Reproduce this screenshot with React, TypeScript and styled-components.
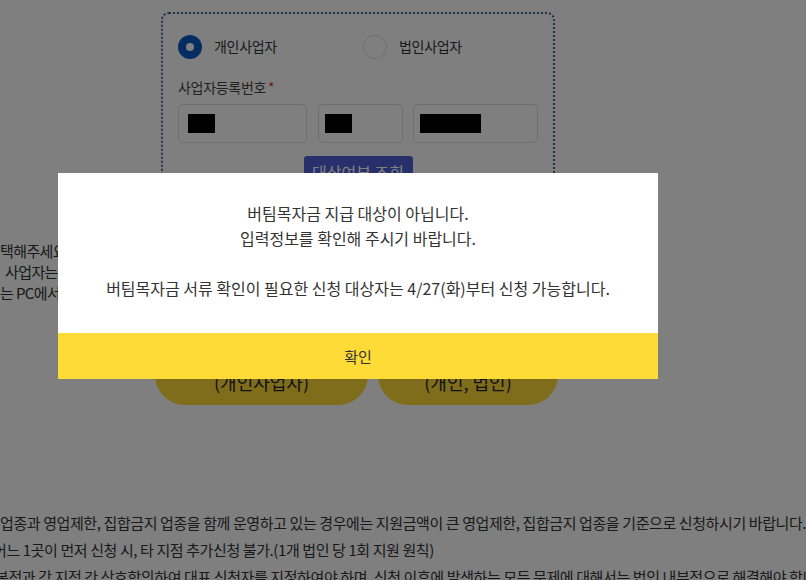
import styled, { createGlobalStyle } from "styled-components";

const GlobalStyle = createGlobalStyle`
  html, body {
    margin: 0;
    padding: 0;
    background: #fff;
    overflow: hidden;
  }
  body {
    font-family: "Noto Sans CJK KR", "Noto Sans", sans-serif;
    color: #333;
  }
`;

const YELLOW = "#ffdb38";

export default function App() {
  return (
    <>
      <GlobalStyle />
      <Page>
        <Column>
          <FormBox>
            <RadioRow>
              <RadioItem>
                <RadioDot checked />
                <RadioText>개인사업자</RadioText>
              </RadioItem>
              <RadioItem>
                <RadioDot />
                <RadioText>법인사업자</RadioText>
              </RadioItem>
            </RadioRow>
            <FieldLabel>
              사업자등록번호<Required>*</Required>
            </FieldLabel>
            <InputRow>
              <NumberBox width={129} pad={9}>
                <Redact width={27} />
              </NumberBox>
              <NumberBox width={85} pad={6}>
                <Redact width={27} />
              </NumberBox>
              <NumberBox width={125} pad={6}>
                <Redact width={61} />
              </NumberBox>
            </InputRow>
            <CheckButton>대상여부 조회</CheckButton>
          </FormBox>
        </Column>

        <SideNote>
          <NoteLine>택해주세요. 사업자 유형에 따라 신청 버튼을 선택하세요.</NoteLine>
          <NoteLine indent={5}>사업자는 개인사업자 신청하기 버튼을 이용해 주세요.</NoteLine>
          <NoteLine>는 PC에서만 신청이 가능합니다.</NoteLine>
        </SideNote>

        <Column>
          <ApplyRow>
            <ApplyButton width={213}>
              버팀목자금 신청하기
              <br />
              (개인사업자)
            </ApplyButton>
            <ApplyButton width={180}>
              서류 제출하기
              <br />
              (개인, 법인)
            </ApplyButton>
          </ApplyRow>
        </Column>

        <Notice>
          <NoticeLine>
            업종과 영업제한, 집합금지 업종을 함께 운영하고 있는 경우에는 지원금액이 큰 영업제한, 집합금지 업종을 기준으로 신청하시기 바랍니다.
          </NoticeLine>
          <NoticeLine indent={-7}>
            어느 1곳이 먼저 신청 시, 타 지점 추가신청 불가.(1개 법인 당 1회 지원 원칙)
          </NoticeLine>
          <NoticeLine indent={-5}>
            본점과 각 지점 간 상호합의하여 대표 신청자를 지정하여야 하며, 신청 이후에 발생하는 모든 문제에 대해서는 법인 내부적으로 해결해야 합니다.
          </NoticeLine>
        </Notice>
      </Page>

      <Overlay>
        <Modal>
          <ModalBody>
            <ModalText>버팀목자금 지급 대상이 아닙니다.</ModalText>
            <ModalText>입력정보를 확인해 주시기 바랍니다.</ModalText>
            <ModalText>&nbsp;</ModalText>
            <ModalText>
              버팀목자금 서류 확인이 필요한 신청 대상자는 4/27(화)부터 신청 가능합니다.
            </ModalText>
          </ModalBody>
          <ConfirmButton>확인</ConfirmButton>
        </Modal>
      </Overlay>
    </>
  );
}

const Page = styled.div`
  width: 806px;
  height: 580px;
  display: flex;
  flex-direction: column;
  overflow: hidden;
`;

const Column = styled.div`
  width: 716px;
  display: flex;
  flex-direction: column;
  align-items: center;
`;

const FormBox = styled.div`
  margin-top: 12px;
  width: 394px;
  box-sizing: border-box;
  border: 2px dotted #3b64a0;
  border-radius: 8px;
  padding: 21px 15px 15px;
  display: flex;
  flex-direction: column;
`;

const RadioRow = styled.div`
  display: flex;
  height: 24px;
`;

const RadioItem = styled.label`
  flex-shrink: 0;
  display: flex;
  align-items: center;
  gap: 12px;

  &:first-child {
    width: 185px;
  }
`;

const RadioDot = styled.span<{ checked?: boolean }>`
  width: 24px;
  height: 24px;
  box-sizing: border-box;
  border-radius: 50%;
  background: #fff;
  border: ${({ checked }) => (checked ? "8px solid #0a5bc4" : "1px solid #ddd")};
`;

const RadioText = styled.span`
  font-size: 14px;
  line-height: 20px;
  margin-top: -3px;
  letter-spacing: -0.3px;
  color: #333;
`;

const FieldLabel = styled.div`
  margin-top: 18px;
  font-size: 14px;
  line-height: 20px;
  letter-spacing: -0.3px;
  color: #444;
`;

const Required = styled.span`
  color: #e03b3b;
  margin-left: 2px;
`;

const InputRow = styled.div`
  margin-top: 7px;
  display: flex;
  justify-content: space-between;
`;

const NumberBox = styled.div<{ width: number; pad: number }>`
  width: ${({ width }) => width}px;
  height: 39px;
  box-sizing: border-box;
  border: 1px solid #ddd;
  border-radius: 5px;
  padding: 9px 0 0 ${({ pad }) => pad}px;
`;

const Redact = styled.div<{ width: number }>`
  width: ${({ width }) => width}px;
  height: 19px;
  background: #000;
`;

const CheckButton = styled.button`
  align-self: center;
  margin-top: 13px;
  width: 109px;
  height: 32px;
  padding: 0;
  border: none;
  border-radius: 3px;
  background: #5060d8;
  color: #fff;
  font-family: inherit;
  font-size: 16px;
  line-height: 28px;
`;

const SideNote = styled.div`
  margin-top: 35px;
  display: flex;
  flex-direction: column;
`;

const NoteLine = styled.p<{ indent?: number }>`
  margin: 0;
  font-size: 15px;
  line-height: 21px;
  letter-spacing: -0.6px;
  color: #333;
  white-space: nowrap;
  text-indent: ${({ indent = 0 }) => indent}px;
`;

const ApplyRow = styled.div`
  margin-top: 30px;
  display: flex;
  gap: 10px;
  margin-left: -3px;
`;

const ApplyButton = styled.div<{ width: number }>`
  width: ${({ width }) => width}px;
  box-sizing: border-box;
  padding: 10px 0 10px;
  border-radius: 30px;
  background: ${YELLOW};
  color: #222;
  font-size: 18px;
  line-height: 26px;
  text-align: center;
  white-space: nowrap;
`;

const Notice = styled.div`
  margin-top: 104px;
  display: flex;
  flex-direction: column;
`;

const NoticeLine = styled.p<{ indent?: number }>`
  margin: 0;
  font-size: 15px;
  line-height: 27px;
  letter-spacing: -0.4px;
  color: #333;
  white-space: nowrap;
  text-indent: ${({ indent = 0 }) => indent}px;
`;

const Overlay = styled.div`
  position: fixed;
  inset: 0;
  background: rgba(0, 0, 0, 0.5);
  display: flex;
  align-items: flex-start;
  padding: 173px 0 0 58px;
`;

const Modal = styled.div`
  width: 600px;
  background: #fff;
  display: flex;
  flex-direction: column;
`;

const ModalBody = styled.div`
  height: 160px;
  box-sizing: border-box;
  padding-top: 28px;
  text-align: center;
`;

const ModalText = styled.p`
  margin: 0;
  font-size: 16px;
  line-height: 25px;
  color: #333;
`;

const ConfirmButton = styled.button`
  height: 46px;
  border: none;
  background: ${YELLOW};
  color: #333;
  font-family: inherit;
  font-size: 15px;
`;
